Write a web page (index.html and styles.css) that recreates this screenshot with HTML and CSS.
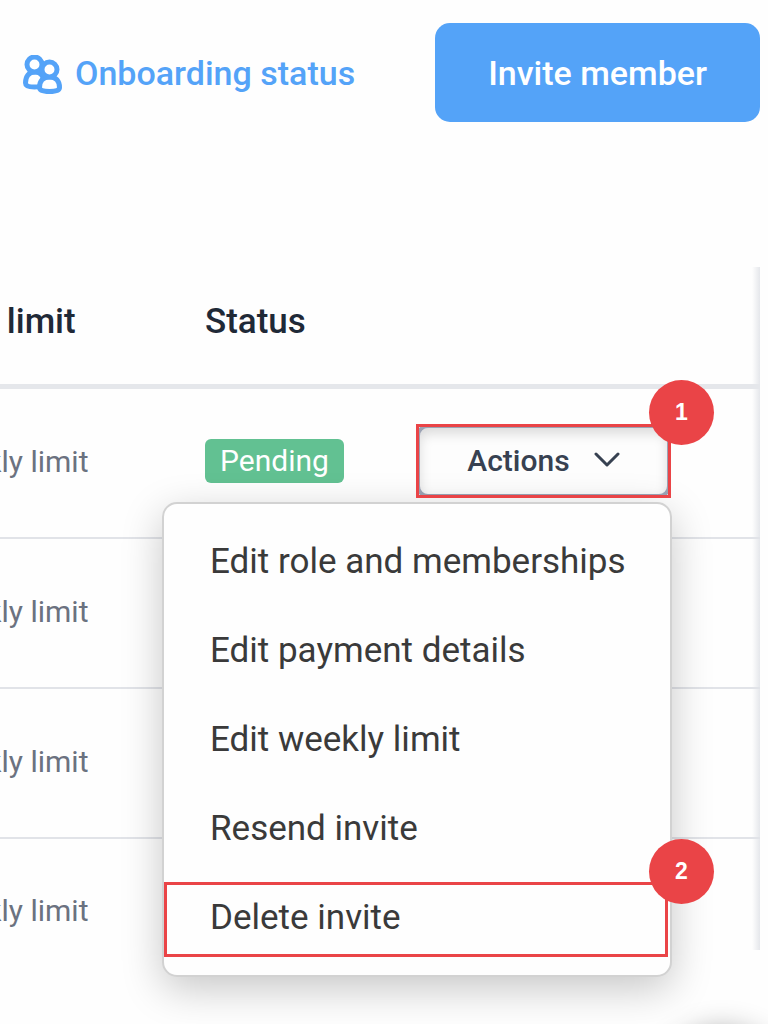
FILE: index.html
```html
<!DOCTYPE html>
<html lang="en">
<head>
<meta charset="utf-8">
<title>Members</title>
<link rel="stylesheet" href="styles.css">
</head>
<body>
<main class="page">
  <header class="toolbar">
    <a class="status-link" href="#onboarding">
      <svg class="people" viewBox="0 0 40 40" aria-hidden="true">
        <g fill="#fff" stroke="currentColor" stroke-width="5" stroke-linejoin="round">
          <path d="M3.500 28C3.500 21 7 17 13 17S22 21 22 28Q22 32 12.500 32Q3.500 32 3.500 28Z"/>
          <circle cx="12.500" cy="9.500" r="7.500"/>
          <path d="M17.500 32.500C17.500 26 21 22 27.500 22S37.500 26 37.500 32.500Q37.500 36.500 27.500 36.500Q17.500 36.500 17.500 32.500Z"/>
          <circle cx="27.500" cy="14.500" r="7.500"/>
        </g>
      </svg>
      <span>Onboarding status</span>
    </a>
    <button class="invite" type="button">Invite member</button>
  </header>

  <section class="card">
    <table class="members">
      <colgroup><col class="col-limit"><col class="col-status"><col></colgroup>
      <thead>
        <tr><th scope="col">Weekly limit</th><th scope="col">Status</th><td></td></tr>
      </thead>
      <tbody>
        <tr>
          <td>No weekly limit</td>
          <td><span class="pill">Pending</span></td>
          <td>
            <div class="actions">
              <button class="actions-button" type="button" aria-haspopup="menu" aria-expanded="true">Actions
                <svg class="chevron" viewBox="0 0 26 16" aria-hidden="true"><path d="M2 2l11 11L24 2"/></svg>
              </button>
              <div class="marker"><span class="badge">1</span></div>
              <ul class="menu" role="menu">
                <li><button type="button" role="menuitem">Edit role and memberships</button></li>
                <li><button type="button" role="menuitem">Edit payment details</button></li>
                <li><button type="button" role="menuitem">Edit weekly limit</button></li>
                <li><button type="button" role="menuitem">Resend invite</button></li>
                <li class="marked"><button type="button" role="menuitem">Delete invite</button><span class="badge">2</span></li>
              </ul>
            </div>
          </td>
        </tr>
        <tr><td>No weekly limit</td><td></td><td></td></tr>
        <tr><td>No weekly limit</td><td></td><td></td></tr>
        <tr><td>No weekly limit</td><td></td><td></td></tr>
      </tbody>
    </table>
  </section>
  <button class="launcher" type="button" aria-label="Help"></button>
</main>
</body>
</html>
```
FILE: styles.css
```css
* { box-sizing: border-box; }

body {
  margin: 0;
  background: #fefefe;
  color: #3a3a3a;
  font-family: Roboto, "Liberation Sans", sans-serif;
}

button { font: inherit; color: inherit; border: 0; background: none; cursor: pointer; }

.page { position: relative; min-height: 100vh; overflow: hidden; padding: 23px 8px 0 0; }

.toolbar { display: flex; justify-content: space-between; align-items: center; padding-left: 22px; }

.status-link {
  display: flex;
  align-items: center;
  gap: 13px;
  color: #54a3f8;
  font-size: 34px;
  font-weight: 500;
  text-decoration: none;
}

.people { width: 40px; height: 40px; margin-top: 4px; }

.invite {
  height: 99px;
  padding: 0 53px;
  border-radius: 15px;
  background: #54a3f8;
  color: #fff;
  font-size: 34px;
  font-weight: 500;
}

.card {
  margin-top: 145px;
  margin-left: -114px;
  background: linear-gradient(to left, #e5e7eb, #e5e7eb00) right / 8px 100% no-repeat;
}

.members { width: 100%; border-collapse: separate; border-spacing: 0; table-layout: fixed; }
.col-limit { width: 319px; }
.col-status { width: 211px; }

.members th, .members td { padding: 0; text-align: left; white-space: nowrap; }

.members thead tr { height: 122px; }
.members thead th, .members thead td {
  padding-bottom: 8px;
  border-bottom: 5px solid #e5e7eb;
  color: #1f2937;
  font-size: 35px;
  font-weight: 500;
}

.members tbody tr { height: 150px; }
.members tbody td {
  padding-bottom: 4px;
  border-bottom: 2px solid #e1e3e8;
  color: #6b7280;
  font-size: 30px;
}
.members tbody tr:last-child { height: 111px; }
.members tbody tr:last-child td { padding-top: 36px; border-bottom: 0; }

.pill {
  display: inline-block;
  padding: 0 15px;
  border-radius: 6px;
  background: #62c192;
  color: #fff;
  line-height: 44px;
}

.actions { position: relative; width: 255px; }

.actions-button {
  display: flex;
  align-items: center;
  justify-content: center;
  gap: 24px;
  width: 100%;
  height: 74px;
  padding: 0 0 2px;
  border: 4px solid #9ca3b4;
  border-radius: 12px;
  background: #fdfdfd;
  box-shadow: inset 0 6px 12px #00000022;
  color: #374151;
  font-size: 30px;
  font-weight: 500;
}

.chevron { width: 26px; height: 16px; fill: none; stroke: currentColor; stroke-width: 3; stroke-linecap: round; stroke-linejoin: round; }

.marker { position: absolute; inset: 0; z-index: 3; border: 3px solid #ea4447; pointer-events: none; }

.badge {
  position: absolute;
  top: -47px;
  right: -46px;
  width: 65px;
  border-radius: 50%;
  background: #ea4447;
  color: #fff;
  font: bold 23px/65px "Liberation Sans", sans-serif;
  text-align: center;
}

.menu {
  position: absolute;
  top: 78px;
  right: -1px;
  z-index: 2;
  display: flex;
  flex-direction: column;
  gap: 14px;
  width: 510px;
  margin: 0;
  padding: 22px 2px 18px 0;
  border: 2px solid #d2d2d2;
  border-radius: 15px;
  background: #fefefe;
  box-shadow: 0 12px 40px #00000038;
  color: #3a3a3a;
  font-size: 35px;
  list-style: none;
}

.menu li { position: relative; }
.menu button { width: 100%; height: 75px; padding: 0 0 4px 46px; text-align: left; }
.marked button { outline: 3px solid #ea4447; outline-offset: -3px; }
.marked .badge { top: -43px; }

.launcher {
  position: absolute;
  top: 1032px;
  right: -14px;
  width: 120px;
  height: 120px;
  border-radius: 50%;
  box-shadow: 0 2px 32px #00000077;
}
```
